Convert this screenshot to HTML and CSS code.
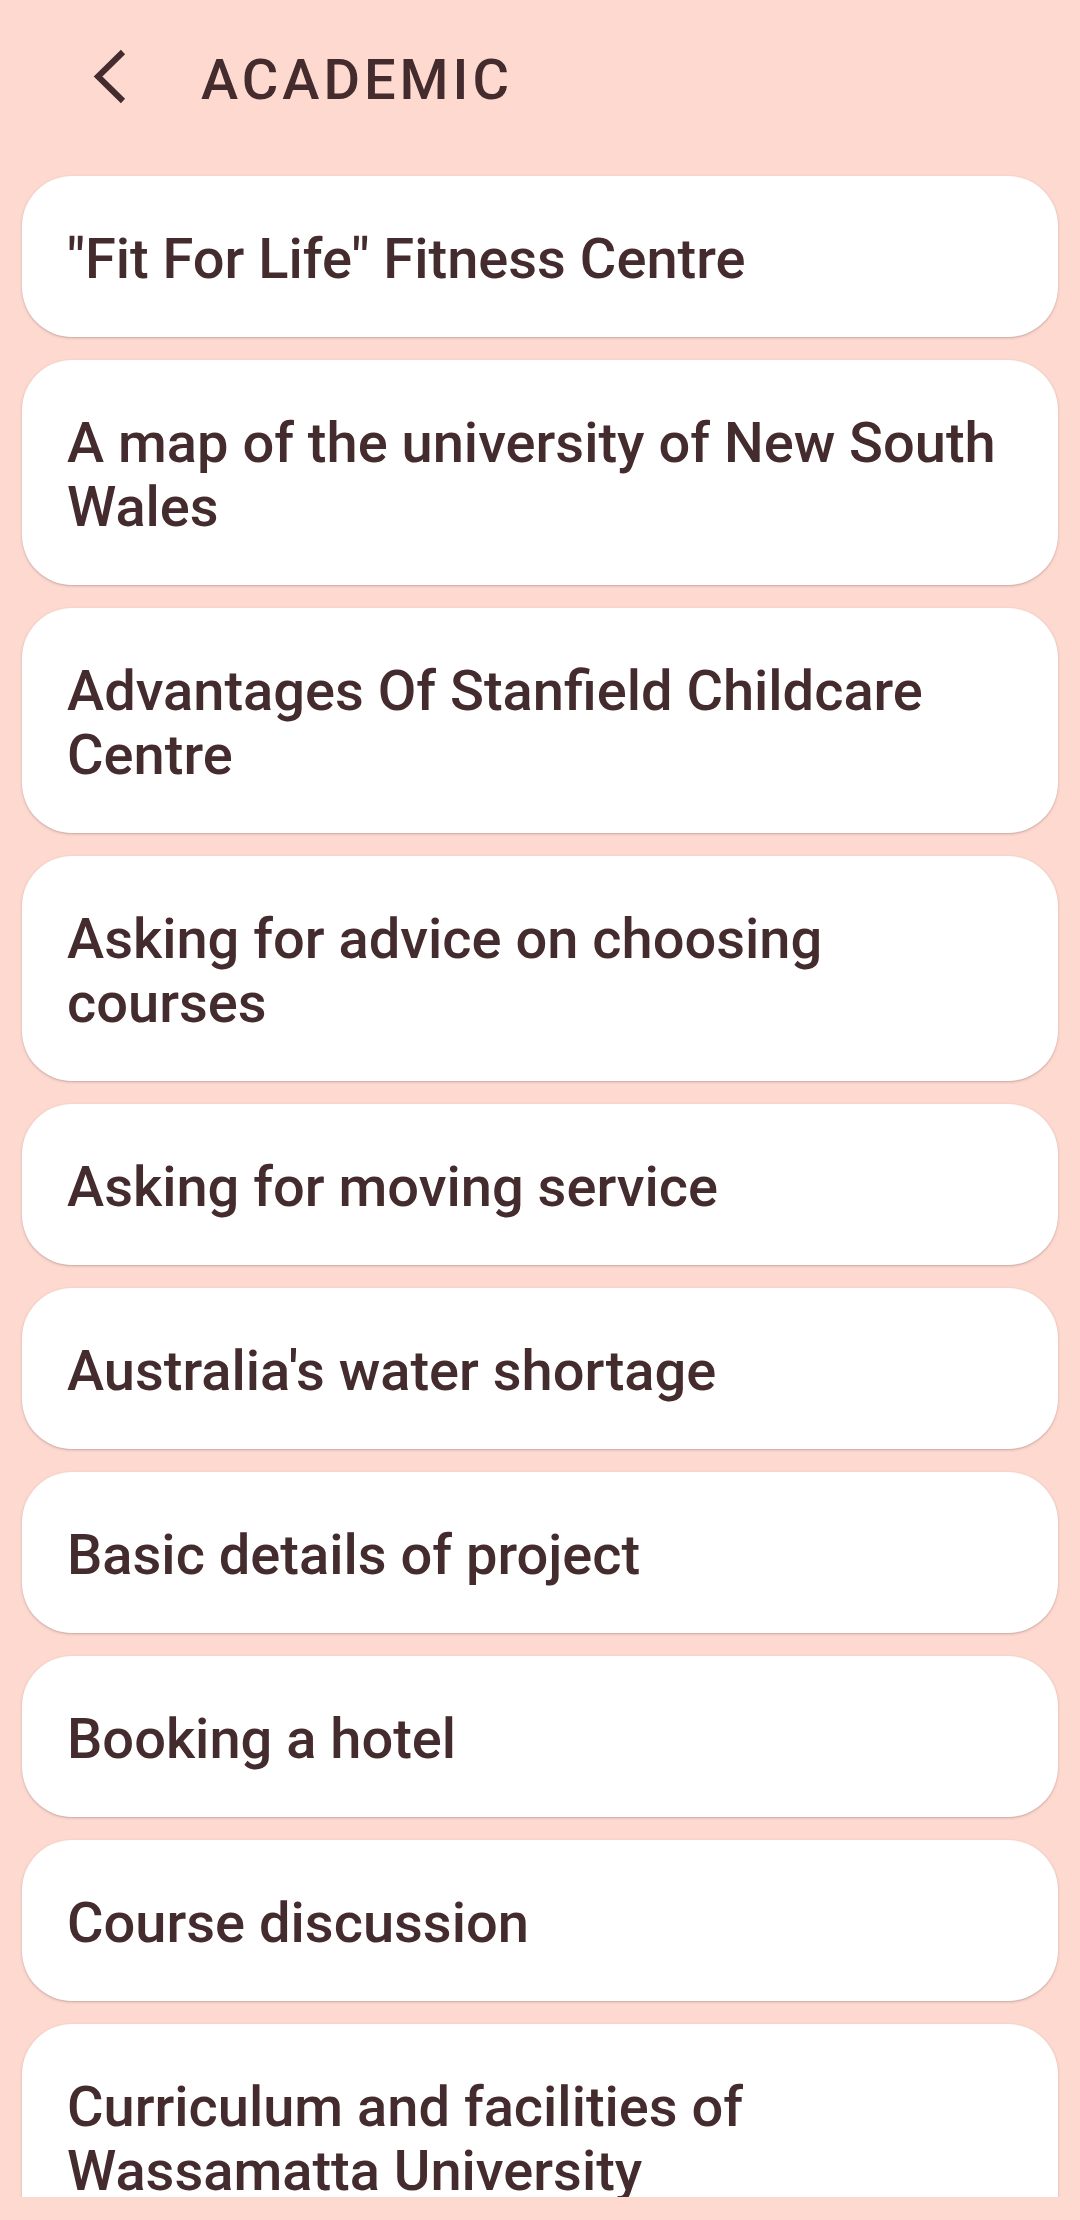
FILE: index.html
```html
<!DOCTYPE html>
<html lang="en">
<head>
    <meta charset="UTF-8">
    <meta name="viewport" content="width=device-width, initial-scale=1.0">
    <title>Academic</title>
    <link rel="stylesheet" href="styles.css">
</head>
<body>
    <div class="screen">
        <header class="topbar">
            <svg class="back" width="36" height="64" viewBox="0 0 36 64">
                <polyline points="31,4 6,28.5 31,53" fill="none" stroke="#442b2d" stroke-width="6" stroke-linejoin="miter" />
            </svg>
            <h1>ACADEMIC</h1>
        </header>

        <div class="list">
            <div class="card">"Fit For Life" Fitness Centre</div>
            <div class="card">A map of the university of New South Wales</div>
            <div class="card">Advantages Of Stanfield Childcare Centre</div>
            <div class="card">Asking for advice on choosing courses</div>
            <div class="card">Asking for moving service</div>
            <div class="card">Australia's water shortage</div>
            <div class="card">Basic details of project</div>
            <div class="card">Booking a hotel</div>
            <div class="card">Course discussion</div>
            <div class="card">Curriculum and facilities of Wassamatta University</div>
        </div>

        <div class="navspace"></div>
    </div>
</body>
</html>
```

FILE: styles.css
```css
html, body {
    margin: 0;
    padding: 0;
}
body {
    font-family: Roboto, "Liberation Sans", sans-serif;
    background: #fdd9d0;
    color: #442b2d;
}
.screen {
    height: 2220px;
    display: flex;
    flex-direction: column;
    overflow: hidden;
}
.topbar {
    height: 160px;
    flex-shrink: 0;
    display: flex;
    align-items: center;
    padding-left: 92px;
}
.back {
    display: block;
}
h1 {
    margin: 0 0 0 73px;
    font-size: 56px;
    line-height: 64px;
    font-weight: 500;
    letter-spacing: 4px;
}
.list {
    flex: 1;
    overflow: hidden;
    padding: 16px 22px 0;
    display: flex;
    flex-direction: column;
    gap: 23px;
}
.card {
    flex-shrink: 0;
    background: #fff;
    border-radius: 50px;
    padding: 51px 45px 46px;
    font-size: 56px;
    line-height: 64px;
    font-weight: 500;
    box-shadow: 0 1px 3px rgba(68, 43, 45, 0.22), 0 1px 1px rgba(68, 43, 45, 0.08);
}
.navspace {
    height: 23px;
    flex-shrink: 0;
}
```
